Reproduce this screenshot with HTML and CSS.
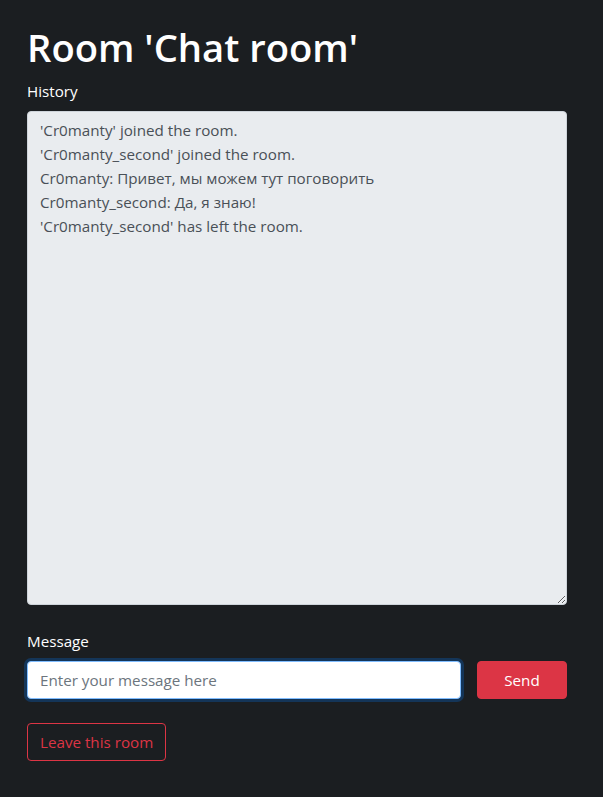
FILE: index.html
```html
<!DOCTYPE html>
<html lang="en">
<head>
<meta charset="utf-8">
<title>Room 'Chat room'</title>
<link rel="stylesheet" href="styles.css">
</head>
<body>
<main class="container">
  <h1 class="title">Room 'Chat room'</h1>
  <div class="field">
    <label class="label" for="history">History</label>
    <textarea id="history" class="history" readonly>'Cr0manty' joined the room.
'Cr0manty_second' joined the room.
Cr0manty: Привет, мы можем тут поговорить
Cr0manty_second: Да, я знаю!
'Cr0manty_second' has left the room.</textarea>
  </div>
  <div class="field">
    <label class="label" for="message">Message</label>
    <div class="send-row">
      <input id="message" class="message-input" type="text" placeholder="Enter your message here">
      <button class="btn btn-danger" type="button">Send</button>
    </div>
  </div>
  <div class="leave-row">
    <button class="btn btn-outline-danger" type="button">Leave this room</button>
  </div>
</main>
</body>
</html>
```
FILE: styles.css
```css
* { box-sizing: border-box; }
html, body { margin: 0; padding: 0; }
body {
  background: #1b1e21;
  color: #ffffff;
  font-family: "Segoe UI", "Open Sans", "Noto Sans", sans-serif;
  font-size: 15.2px;
  line-height: 24px;
}
.container {
  width: 540px;
  margin-left: 27px;
  padding-top: 23px;
}
.title {
  margin: 0 0 8px;
  font-size: 38.2px;
  line-height: 48px;
  font-weight: 600;
}
.field { margin-bottom: 24px; }
.label {
  display: block;
  margin-bottom: 8px;
  font-size: 15.2px;
  line-height: 24px;
}
.history {
  display: block;
  width: 100%;
  height: 494px;
  margin: 0;
  padding: 6px 12px;
  background: #e9ecef;
  color: #495057;
  border: 1px solid #ced4da;
  border-radius: 4px;
  font-family: inherit;
  font-size: 15.2px;
  line-height: 24px;
  resize: vertical;
  outline: none;
}
.send-row {
  display: flex;
  gap: 16px;
}
.message-input {
  flex: 1;
  height: 38px;
  padding: 6px 12px;
  background: #fff;
  color: #495057;
  border: 1px solid #80bdff;
  border-radius: 4px;
  box-shadow: 0 0 0 3px rgba(0, 123, 255, 0.25);
  font-family: inherit;
  font-size: 15.2px;
  line-height: 24px;
  outline: none;
}
.message-input::placeholder { color: #6c757d; opacity: 1; }
.btn {
  height: 38px;
  padding: 6px 12px;
  border-radius: 4px;
  font-family: inherit;
  font-size: 15.2px;
  line-height: 24px;
  cursor: pointer;
}
.btn-danger {
  width: 90px;
  background: #dc3545;
  border: 1px solid #dc3545;
  color: #fff;
}
.btn-outline-danger {
  background: transparent;
  border: 1px solid #dc3545;
  color: #dc3545;
}
```
